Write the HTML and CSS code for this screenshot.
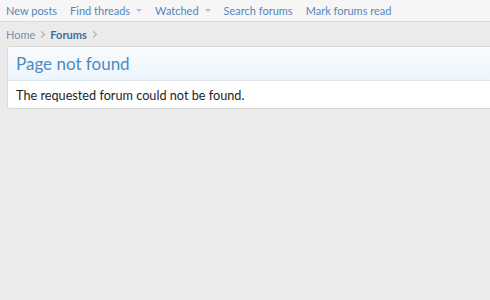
FILE: index.html
```html
<!DOCTYPE html>
<html lang="en">
<head>
    <meta charset="UTF-8">
    <meta name="viewport" content="width=device-width, initial-scale=1.0">
    <title>Page not found</title>
    <link rel="stylesheet" href="styles.css">
</head>
<body>

    <nav class="section-links">
        <a href="#">New posts</a>
        <a href="#" class="has-menu">Find threads<span class="menu-arrow"></span></a>
        <a href="#" class="has-menu">Watched<span class="menu-arrow"></span></a>
        <a href="#">Search forums</a>
        <a href="#">Mark forums read</a>
    </nav>

    <div class="page-body">
        <ul class="breadcrumbs">
            <li><a href="#">Home</a></li>
            <li><a href="#" class="current">Forums</a></li>
        </ul>

        <div class="block">
            <h2 class="block-header">Page not found</h2>
            <div class="block-row">The requested forum could not be found.</div>
        </div>
    </div>

</body>
</html>
```

FILE: styles.css
```css
body {
    margin: 0;
    font-family: Lato, "Liberation Sans", sans-serif;
    font-size: 11px;
    color: #1e1e1e;
    background-color: #ebebeb;
    overflow: hidden;
}
a {
    text-decoration: none;
}
.section-links {
    display: flex;
    align-items: center;
    gap: 13px;
    height: 21px;
    padding: 0 6px;
    background-color: #f6f6f6;
    border-bottom: 1px solid #dadada;
}
.section-links a {
    color: #5587b8;
    display: flex;
    align-items: center;
    white-space: nowrap;
}
.menu-arrow {
    display: inline-block;
    margin-left: 6px;
    border-left: 3px solid transparent;
    border-right: 3px solid transparent;
    border-top: 3px solid #a9bfd3;
}
.page-body {
    padding: 0 7px;
}
.breadcrumbs {
    list-style: none;
    margin: 0;
    padding: 0;
    height: 24px;
    display: flex;
    align-items: center;
}
.breadcrumbs li {
    display: flex;
    align-items: center;
}
.breadcrumbs li::after {
    content: "";
    width: 4px;
    height: 4px;
    margin: 0 6px 0 4px;
    border-top: 1px solid #a8a8a8;
    border-right: 1px solid #a8a8a8;
    transform: rotate(45deg);
}
.breadcrumbs a {
    color: #7393b0;
}
.breadcrumbs li:first-child a {
    margin-left: -1px;
}
.breadcrumbs a.current {
    color: #3a6e9c;
    font-weight: bold;
}
.block {
    margin-right: -20px;
    background-color: #fff;
    border: 1px solid #d9d9d9;
    border-radius: 3px;
}
.block-header {
    margin: 0;
    height: 34px;
    box-sizing: border-box;
    padding: 0 8px 1px;
    display: flex;
    align-items: center;
    font-size: 17px;
    font-weight: normal;
    color: #4a8cc4;
    background: linear-gradient(to bottom, #f9fbfd, #edf5fc);
    border-bottom: 1px solid #dde3ea;
    border-radius: 3px 3px 0 0;
}
.block-row {
    height: 27px;
    padding: 0 8px;
    display: flex;
    align-items: center;
    font-size: 12.7px;
}
```
